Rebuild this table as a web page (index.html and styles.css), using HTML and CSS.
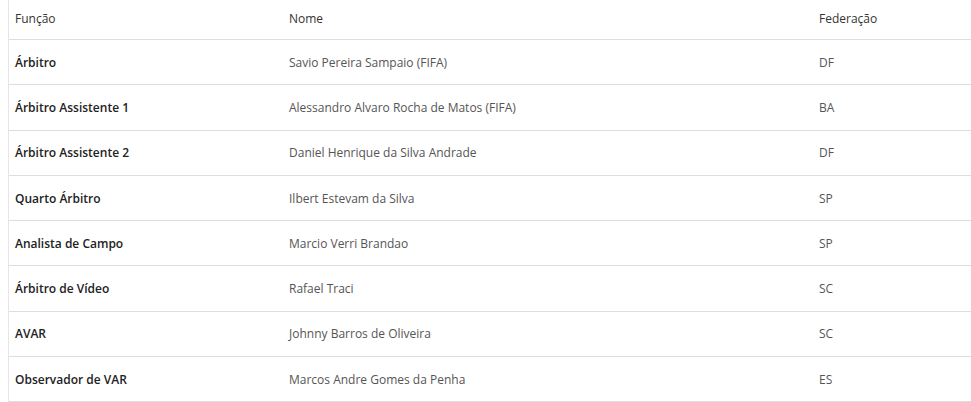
FILE: index.html
```html
<!DOCTYPE html>
<html lang="pt-BR">
<head>
<meta charset="utf-8">
<link rel="stylesheet" href="styles.css">
</head>
<body>
<div class="wrap">
<table class="ref">
  <thead>
    <tr><th class="c1">Função</th><th class="c2">Nome</th><th class="c3">Federação</th></tr>
  </thead>
  <tbody>
    <tr><td class="role">Árbitro</td><td>Savio Pereira Sampaio (FIFA)</td><td>DF</td></tr>
    <tr><td class="role">Árbitro Assistente 1</td><td>Alessandro Alvaro Rocha de Matos (FIFA)</td><td>BA</td></tr>
    <tr><td class="role">Árbitro Assistente 2</td><td>Daniel Henrique da Silva Andrade</td><td>DF</td></tr>
    <tr><td class="role">Quarto Árbitro</td><td>Ilbert Estevam da Silva</td><td>SP</td></tr>
    <tr><td class="role">Analista de Campo</td><td>Marcio Verri Brandao</td><td>SP</td></tr>
    <tr><td class="role">Árbitro de Vídeo</td><td>Rafael Traci</td><td>SC</td></tr>
    <tr><td class="role">AVAR</td><td>Johnny Barros de Oliveira</td><td>SC</td></tr>
    <tr><td class="role">Observador de VAR</td><td>Marcos Andre Gomes da Penha</td><td>ES</td></tr>
  </tbody>
</table>
</div>
</body>
</html>
```
FILE: styles.css
```css
html, body {
  margin: 0;
  padding: 0;
  background: #fff;
}
body {
  font-family: "Open Sans", "Liberation Sans", sans-serif;
  font-size: 12px;
  color: #555;
}
.wrap {
  margin-left: 8px;
  border-left: 1px solid #e6e6e6;
  width: 962px;
}
.ref {
  width: 100%;
  border-collapse: collapse;
  table-layout: fixed;
}
.ref th {
  font-weight: normal;
  color: #333;
  text-align: left;
  height: 37px;
  padding: 0 6px 2px;
  border-bottom: 1px solid #dedede;
}
.ref td {
  height: 44.3px;
  padding: 0 6px;
  border-bottom: 1px solid #dedede;
  vertical-align: middle;
}
.ref .c1 { width: 262px; }
.ref .c2 { width: 518px; }
.ref td.role {
  font-weight: 600;
  color: #222;
}
```
